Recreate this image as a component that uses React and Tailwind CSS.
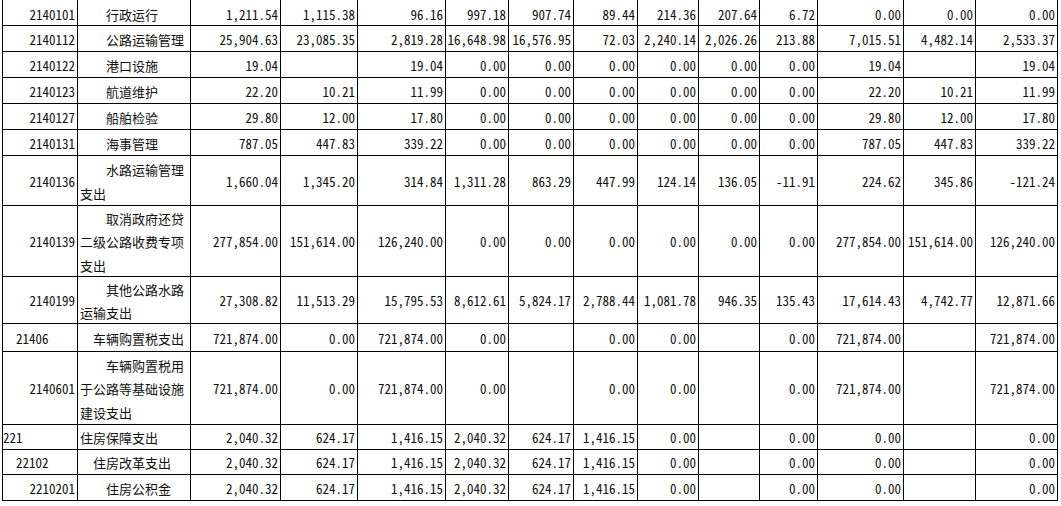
import React from "react";

const S = "\u3000";

const rows = [
  { code: "2140101", ca: "r", name: [S + S + "行政运行"], v: ["1,211.54", "1,115.38", "96.16", "997.18", "907.74", "89.44", "214.36", "207.64", "6.72", "0.00", "0.00", "0.00"] },
  { code: "2140112", ca: "r", name: [S + S + "公路运输管理"], v: ["25,904.63", "23,085.35", "2,819.28", "16,648.98", "16,576.95", "72.03", "2,240.14", "2,026.26", "213.88", "7,015.51", "4,482.14", "2,533.37"] },
  { code: "2140122", ca: "r", name: [S + S + "港口设施"], v: ["19.04", "", "19.04", "0.00", "0.00", "0.00", "0.00", "0.00", "0.00", "19.04", "", "19.04"] },
  { code: "2140123", ca: "r", name: [S + S + "航道维护"], v: ["22.20", "10.21", "11.99", "0.00", "0.00", "0.00", "0.00", "0.00", "0.00", "22.20", "10.21", "11.99"] },
  { code: "2140127", ca: "r", name: [S + S + "船舶检验"], v: ["29.80", "12.00", "17.80", "0.00", "0.00", "0.00", "0.00", "0.00", "0.00", "29.80", "12.00", "17.80"] },
  { code: "2140131", ca: "r", name: [S + S + "海事管理"], v: ["787.05", "447.83", "339.22", "0.00", "0.00", "0.00", "0.00", "0.00", "0.00", "787.05", "447.83", "339.22"] },
  { code: "2140136", ca: "r", name: [S + S + "水路运输管理", "支出"], v: ["1,660.04", "1,345.20", "314.84", "1,311.28", "863.29", "447.99", "124.14", "136.05", "-11.91", "224.62", "345.86", "-121.24"] },
  { code: "2140139", ca: "r", name: [S + S + "取消政府还贷", "二级公路收费专项", "支出"], v: ["277,854.00", "151,614.00", "126,240.00", "0.00", "0.00", "0.00", "0.00", "0.00", "0.00", "277,854.00", "151,614.00", "126,240.00"] },
  { code: "2140199", ca: "r", name: [S + S + "其他公路水路", "运输支出"], v: ["27,308.82", "11,513.29", "15,795.53", "8,612.61", "5,824.17", "2,788.44", "1,081.78", "946.35", "135.43", "17,614.43", "4,742.77", "12,871.66"] },
  { code: "21406", ca: "1", name: [S + "车辆购置税支出"], v: ["721,874.00", "0.00", "721,874.00", "0.00", "", "0.00", "0.00", "", "0.00", "721,874.00", "", "721,874.00"] },
  { code: "2140601", ca: "r", name: [S + S + "车辆购置税用", "于公路等基础设施", "建设支出"], v: ["721,874.00", "0.00", "721,874.00", "0.00", "", "0.00", "0.00", "", "0.00", "721,874.00", "", "721,874.00"] },
  { code: "221", ca: "0", name: ["住房保障支出"], v: ["2,040.32", "624.17", "1,416.15", "2,040.32", "624.17", "1,416.15", "0.00", "", "0.00", "0.00", "", "0.00"] },
  { code: "22102", ca: "1", name: [S + "住房改革支出"], v: ["2,040.32", "624.17", "1,416.15", "2,040.32", "624.17", "1,416.15", "0.00", "", "0.00", "0.00", "", "0.00"] },
  { code: "2210201", ca: "r", name: [S + S + "住房公积金"], v: ["2,040.32", "624.17", "1,416.15", "2,040.32", "624.17", "1,416.15", "0.00", "", "0.00", "0.00", "", "0.00"] },
];

const cell = "border-r border-b border-black flex items-center overflow-hidden";
const num = "font-['Noto_Sans_CJK_SC',sans-serif] text-[13px] [font-feature-settings:'hwid'] text-[#111]";
const codeAlign = {
  r: "justify-end pr-[2px]",
  "1": "justify-start pl-[13px]",
  "0": "justify-start pl-0",
};

export default function App() {
  return (
    <div className="w-[1061px] h-[506px] bg-white overflow-hidden">
      <div className="ml-[2px] w-[1056px] border-l border-black grid grid-cols-[75px_113px_90px_77px_88px_63px_65px_64px_61px_61px_58px_86px_72px_82px] grid-rows-[26px_26px_26px_26px_26px_26px_50px_71px_47px_28px_73px_25px_25px_26px]">
        {rows.map((r, i) => {
          const pt = i === 0 ? "pt-[5px]" : "pt-[2px]";
          return (
            <React.Fragment key={i}>
              <div className={`${cell} ${pt} ${num} ${codeAlign[r.ca]}`}>{r.code}</div>
              <div className={`${cell} ${pt} flex-col !items-start justify-center pl-[2px] whitespace-pre font-['Noto_Sans_CJK_SC',sans-serif] text-[13px] leading-[23.5px] text-[#111]`}>
                {r.name.map((l, j) => (
                  <div key={j}>{l}</div>
                ))}
              </div>
              {r.v.map((x, j) => (
                <div key={j} className={`${cell} ${pt} ${num} justify-end pr-[2px]`}>
                  {x}
                </div>
              ))}
            </React.Fragment>
          );
        })}
      </div>
    </div>
  );
}
